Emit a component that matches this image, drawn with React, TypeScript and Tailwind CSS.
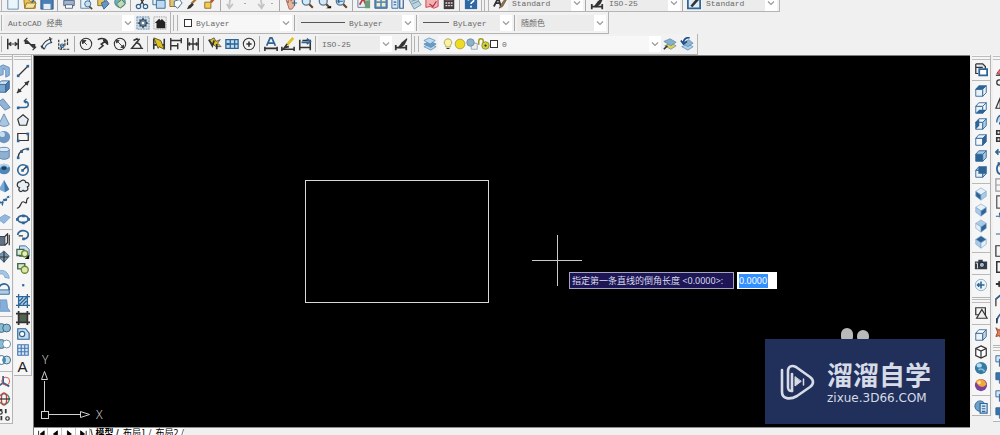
import type { ReactNode } from 'react';
import { clsx } from 'clsx';

const B = '#2f6496';
const L = '#a9cbe8';
const K = '#333333';
const Y = '#dfc21c';

const line = { fill: 'none', stroke: K, strokeWidth: 1.4 };
const blue = { fill: 'none', stroke: B, strokeWidth: 1.4 };

const ends = (points: number[][]) =>
  points.map(([x, y]) => <rect key={`${x}-${y}`} x={x - 1} y={y - 1} width="3" height="3" fill={B} />);

const cube = (front: string, top: string, side: string) => (
  <g stroke={B} strokeWidth="1">
    <path d="M2 6h8v8H2z" fill={front} />
    <path d="M2 6l3.500-4H14l-4 4z" fill={top} />
    <path d="M10 6l4-4v8l-4 4z" fill={side} />
  </g>
);

const iso = (top: string, left: string, right: string) => (
  <g stroke="#7ba3c8" strokeWidth=".7">
    <path d="M8 1l6 4-6 4-6-4z" fill={top} />
    <path d="M2 5l6 4v6l-6-4.500z" fill={left} />
    <path d="M14 5L8 9v6l6-4.500z" fill={right} />
  </g>
);

const lens = (extra?: ReactNode) => (
  <>
    <circle cx="6" cy="6" r="4.500" fill="#d4e8f6" stroke="#57789a" strokeWidth="1.500" />
    <path d="M9.500 9.500l4 4" stroke="#6a4525" strokeWidth="2.500" />
    {extra}
  </>
);

const icons: Record<string, ReactNode> = {
  new: <path d="M2 0h9l3 3v12H2z" fill="#eaf5fc" stroke="#5d87a8" />,
  open: <><path d="M1 4h5l2 2h6v8H2z" fill="#edc451" stroke="#8e6c20" /><path d="M4 8h11l-3 6H2z" fill="#f6e39b" stroke="#8e6c20" /><path d="M8 3l4 2-2 3" {...blue} /></>,
  save: <><path d="M1 1h14v14H1z" fill="#4a7fb5" stroke="#2b527d" /><path d="M4 9h8v6H4z" fill="#e5edf4" /></>,
  print: <><path d="M2 5h12v6H2z" fill="#9fb3cc" stroke="#4c5d7d" /><path d="M4 10h8v4H4zM4 1h8v4H4z" fill="#fff" stroke="#4c5d7d" /></>,
  preview: <><path d="M2 1h10v13H2z" fill="#e9f2f8" stroke="#58799a" /><circle cx="10" cy="9" r="3.500" fill="#c8dff0" stroke={B} /><path d="M12 12l3 3" stroke="#6a4525" strokeWidth="2" /></>,
  publish: <><path d="M2 2h8v9H2z" fill="#e6c657" stroke="#7b6528" /><path d="M6 8l6-3 3 4-6 6z" fill="#6796c4" stroke={B} /></>,
  globe: <><circle cx="8" cy="7" r="6" fill="#6fb2bf" stroke="#45788a" /><path d="M4 9l4 5 6-5-4-5z" fill="#c2d9b8" stroke="#4d7c55" /></>,
  cut: <><path d="M5 1l5 9M12 1L6 10" {...line} /><circle cx="4" cy="12" r="2.500" {...blue} /><circle cx="12" cy="12" r="2.500" {...blue} /></>,
  copy: <><path d="M1 1h9v9H1z" fill="#e4f0f8" stroke={B} /><path d="M5 5h10v9H5z" fill="#bed9ee" stroke={B} /></>,
  paste: <><path d="M1 1h11v11H1z" fill="#e2c476" stroke="#8e6c20" /><path d="M6 6l6-2 3 4-5 6-4-3z" fill="#fafafa" stroke={B} /></>,
  brush: <><path d="M14 1L6 9" stroke="#a8742f" strokeWidth="2.500" /><path d="M7 8l2 2-4 4-4 1 2-4z" fill={K} /></>,
  block: <><path d="M14 1L9 7" stroke="#b9542c" strokeWidth="3" /><path d="M2 7h7v7H2z" fill="#f1cd4e" stroke="#8a642d" /></>,
  undo: <path d="M9 1c-4 3-4 6-4 12M2 9l3 5 4-5" fill="none" stroke="#c3c3c3" strokeWidth="2" />,
  pan: <><path d="M2 3l3 5V1h2l1 5 2-5 2 1v9l-3 4H6z" fill="#e9b39a" stroke="#9b6658" /><path d="M9 8h6M12 5v6" {...blue} /></>,
  zoom: lens(),
  zoomWindow: lens(<path d="M9 14h6v-3z" fill="#111" />),
  zoomPrev: lens(<path d="M3 6h6M3 6l2-2M3 6l2 2" {...blue} />),
  props: <><path d="M1 1h13v12H1z" fill="#e8eff5" stroke="#57789a" /><path d="M3 10l4-7 4 9" fill="none" stroke="#c33d3d" strokeWidth="2" /><path d="M9 5h6v9H9z" fill="#6b9c79" /></>,
  design: <><path d="M1 1h14v13H1z" fill="#5f8fbc" stroke="#315a86" /><path d="M3 3h4v3H3zM9 3h4v3H9zM3 8h4v4H3zM9 8h4v4H9z" fill="#f2efc2" /></>,
  palette: <><path d="M1 1h7v13H1z" fill="#dceaf4" stroke={B} /><path d="M10 3h4v11h-4zM3 4h3M3 7h3M3 10h3" {...blue} /></>,
  sheet: <path d="M1 4l8-3 6 9-8 5zM4 6l6-2M5 9l7-3" fill="#bcd4df" stroke="#6d91a6" />,
  markup: <><path d="M1 3l5-2 4 3 5-1v9l-5 2-4-2-5 1z" fill="#f3b2b2" stroke="#cc3a50" /><path d="M5 9l4 3 4-6" {...line} stroke="#b3314a" /></>,
  calc: <><path d="M2 0h12v15H2z" fill="#423c40" /><path d="M4 2h8v3H4z" fill="#cc6b62" /><path d="M4 8h8M4 11h8" stroke="#ddd" strokeWidth="1.500" strokeDasharray="2 1" /></>,
  help: <><path d="M1 0h14v15H1z" fill="#2d6aa5" /><path d="M5 5c0-4 6-4 6 0 0 2-3 2-3 4M8 11v2" fill="none" stroke="#fff" strokeWidth="2" /></>,
  textStyle: <><path d="M1 12L6 2l3 10M3 8h5" {...line} strokeWidth="2" /><path d="M14 3l-5 7-2 4 4-2 4-7z" fill="#9d753b" stroke={K} strokeWidth=".6" /></>,
  dimStyle: <><path d="M2 9v6M14 9v6M2 12h12" {...line} strokeWidth="2" /><path d="M15 1L9 6l-4 5 2 2 5-4 3-6z" fill={K} /></>,
  tableStyle: <><path d="M1 1h14v13H1z" fill="#ddebf6" stroke={B} strokeWidth="2" /><path d="M13 3l-8 9" stroke={K} strokeWidth="3" /></>,
  gear: <><path d="M1 1h14v14H1z" fill="#c9dced" stroke="#62819e" strokeDasharray="2 1" /><path d="M8 2v12M2 8h12M4 4l8 8M12 4l-8 8" stroke="#4b6987" strokeWidth="2" /><circle cx="8" cy="8" r="4" fill="#69859f" stroke={K} /><circle cx="8" cy="8" r="1.500" fill="#fff" /></>,
  workspace: <><path d="M1 1h14v14H1z" fill="#efefef" stroke="#888" strokeDasharray="1 1" /><path d="M4 14V8H2l5-5 2 2 1-2 4 4v7z" fill="#222" /></>,

  dimLinear: <><path d="M2 2v12M14 2v12" {...line} strokeWidth="1.700" /><path d="M3 8h10M6 6L3 8l3 2M10 6l3 2-3 2" {...line} /></>,
  dimAligned: <><path d="M1 5l4-4M11 15l4-4" {...line} /><path d="M4 4l8 8M3 3v4h4M13 13V9H9" {...line} strokeWidth="2" /></>,
  dimArc: <><path d="M2 13C3 6 7 3 14 2" {...line} /><path d="M5 14c1-5 4-7 9-8" {...blue} /><path d="M1 10l4 4M11 0l2 7" {...line} /></>,
  dimOrdinate: <><path d="M2 3v11h12M5 14v-4h4V3M12 2v8" {...line} strokeDasharray="3 1" /><circle cx="6" cy="10" r="2" {...blue} /></>,
  radius: <><circle cx="8" cy="8" r="6.500" {...line} strokeWidth="1.200" /><path d="M4 4l5 5M4 4v4l4-4z" fill={K} stroke={K} /></>,
  jogged: <><path d="M2 3c6-3 12 0 11 6M3 14l5-4-2-2 6-4M12 4H8M12 4v4" {...line} strokeWidth="1.800" /></>,
  diameter: <><circle cx="8" cy="8" r="6.500" {...line} strokeWidth="1.200" /><path d="M4 4l8 8M4 4v3l3-3zM12 12V9l-3 3z" fill={K} stroke={K} /></>,
  angular: <path d="M11 2L2 13h13M6 7c4-1 6 2 7 6M4 4l4-2 2 3" {...line} strokeWidth="1.700" />,
  quick: <><path d="M2 2v12M14 2v12M2 9h12" {...line} strokeWidth="1.800" /><path d="M2 1l8 3 4 10-6-3-1 2z" fill={Y} stroke="#554a18" /></>,
  baseline: <path d="M2 1v14M2 4h12M2 10h8M14 1v6M10 7v7M12 4h-3" {...line} strokeWidth="1.600" />,
  continued: <path d="M2 1v14M8 1v14M14 1v14M2 8h12M4 6v4M12 6v4" {...line} strokeWidth="1.600" />,
  leader: <><path d="M1 4l6-3 2 4 5-2-3 4 4 4H9z" fill={Y} stroke="#555" /><path d="M1 3l4 7 2-6M10 8v6" {...line} strokeWidth="2" /></>,
  tolerance: <><path d="M1 3h14v10H1zM6 3v10M11 3v10M1 8h14" fill="#c4def1" stroke={B} strokeWidth="1.500" /><circle cx="3.500" cy="8" r="1.500" fill={B} /></>,
  center: <><circle cx="8" cy="8" r="6.500" {...line} strokeWidth="1.200" /><path d="M8 5v6M5 8h6" {...line} strokeWidth="1.800" /></>,
  dimText: <><path d="M3 10L7 1h2l4 9M5 7h6" {...blue} strokeWidth="2" /><path d="M1 13h14M1 11v5M15 11v5" {...line} strokeWidth="1.800" /></>,
  dimEdit: <><path d="M14 1L7 9" stroke={Y} strokeWidth="3" /><path d="M7 8l-3 4 5-1M1 14h14M1 11v5M15 11v5" {...line} strokeWidth="1.800" /></>,
  dimUpdate: <><path d="M2 3v12M14 3v12M2 12h12M5 4h8" {...line} strokeWidth="1.800" /><path d="M4 6h8M10 2l4 3-4 3" {...blue} strokeWidth="2" /></>,
  layers: <g stroke="#5588b1" strokeWidth=".8"><path d="M1 11l7-3 7 3-6 4z" fill="#b7d5ed" /><path d="M1 8l7-3 7 3-6 4z" fill="#6b9cc6" /><path d="M1 4l6-3 7 3-6 4z" fill="#bedbf0" /></g>,
  layersMake: <g stroke="#5e8799" strokeWidth=".8"><path d="M2 10l7-3 6 3-6 4z" fill="#e2cf4b" /><path d="M1 5l7-3 7 4-6 4z" fill="#80b0d2" /><path d="M1 14l4-4" stroke={K} strokeWidth="2" /></g>,
  layersPrev: <g stroke="#5588b1" strokeWidth=".8"><path d="M2 11l7-3 6 3-6 4z" fill="#aed0ea" /><path d="M3 7l7-4 5 4-6 4z" fill="#8bb3d6" /><path d="M11 1C7 0 4 3 4 6M1 4l3 4 4-3" fill="none" stroke="#1f4e87" strokeWidth="2" /></g>,
  bulb: <><path d="M8 1a5 5 0 0 1 3 9v2H5v-2a5 5 0 0 1 3-9z" fill="#fbf2a1" stroke="#9b9045" /><path d="M6 14h4" {...line} /></>,
  sun: <circle cx="8" cy="8" r="6.500" fill="#eedb25" stroke="#9e9130" />,
  vp: <><path d="M7 7h8v8H7z" fill="#eee" stroke="#7899af" /><circle cx="6" cy="6" r="5" fill="#8db1c8" stroke="#628398" /></>,
  lock: <><path d="M1 9V4c0-4 6-4 6 0v3" fill="none" stroke="#a39d1e" strokeWidth="2" /><circle cx="10" cy="10" r="5" fill="#cfd03d" stroke="#7d8127" /><circle cx="10" cy="10" r="1.500" fill={K} /></>,

  line: <><path d="M2 14L14 2" {...line} />{ends([[2, 13], [13, 2]])}</>,
  xline: <><path d="M1 15L15 1" {...line} /><path d="M2 14l1-4 3 3zM14 2l-1 4-3-3z" fill={K} stroke={K} /></>,
  pline: <><path d="M2 12h8c6 0 5-8-1-7" {...blue} strokeWidth="1.800" /><path d="M9 5l3-3M9 5l3 2" {...blue} />{ends([[2, 12]])}</>,
  polygon: <path d="M8 2l6 5-2 7H4L2 7z" {...line} fill="#e5eef5" />,
  rect: <><path d="M2 4h12v8H2z" {...line} />{ends([[2, 12], [13, 4]])}</>,
  arc: <><path d="M2 14C3 7 7 3 14 3" {...line} />{ends([[2, 13], [6, 6], [13, 3]])}</>,
  circle: <><circle cx="8" cy="8" r="6" {...blue} strokeWidth="1.800" /><path d="M8 8l4-4" {...line} />{ends([[7, 8], [12, 4]])}</>,
  cloud: <path d="M5 3c2-3 6-2 6 1 4-1 5 4 2 5 2 4-2 6-5 4-3 3-6 0-4-3-4-1-3-7 1-7z" {...line} fill="#e7f0f6" />,
  spline: <path d="M1 14C5 14 5 9 7 7s5 3 5 0 1-5 3-5" {...line} />,
  ellipse: <><ellipse cx="8" cy="8" rx="6" ry="4" {...blue} strokeWidth="2" />{ends([[1, 8], [14, 8], [8, 4], [8, 12]])}</>,
  ellipseArc: <><path d="M2 8c0-7 13-6 12 0 0 3-3 5-6 4" {...blue} strokeWidth="2" /><path d="M3 9h5" {...line} />{ends([[8, 12]])}</>,
  insert: <><path d="M4 1h7l4 4v8H4z" fill="#cee2f2" stroke={B} /><path d="M1 5h8v7H1z" fill="#dce9ce" stroke="#3f6555" strokeWidth="1.500" /><circle cx="10" cy="10" r="3.500" fill="#e7eeb9" stroke="#648930" strokeWidth="1.500" /><path d="M15 11v5h-5z" fill="#111" /></>,
  makeBlock: <><path d="M2 3h8v6H2z" fill="#dce9ce" stroke="#3f6555" strokeWidth="1.600" /><circle cx="10" cy="10" r="4" fill="#dce8aa" stroke="#6a8833" strokeWidth="1.500" /></>,
  point: <rect x="7" y="7" width="2.500" height="2.500" fill={B} />,
  hatch: <><path d="M3 3h10v10H3z" fill="#b7d5ed" /><path d="M3 0v16M13 0v16M0 3h16M0 13h16M4 8l4-4M4 12l8-8M8 12l4-4" {...blue} strokeWidth="1.500" /></>,
  gradient: <><path d="M3 3h10v10H3z" fill="#536353" /><path d="M3 0v16M13 0v16M0 3h16M0 13h16" {...line} strokeWidth="2" /></>,
  region: <><path d="M2 2h9l4 5v7H2z" fill="#c6dcef" stroke={B} strokeWidth="1.300" /><circle cx="7" cy="8" r="3" fill="#fff" stroke={B} strokeWidth="1.300" /></>,
  table: <path d="M2 2h12v12H2zM2 6h12M2 10h12M6 2v12M10 2v12" fill="#d7e8f7" stroke="#4476b2" strokeWidth="1.300" />,

  polysolid: <path d="M1 4l6-3 7 3v9l-4 2V7L7 5v7l-6 2z" fill="#8fb5dc" stroke="#5e87b6" />,
  box: <g stroke={B}><path d="M1 5h9v9H1z" fill="#7ba7d1" /><path d="M1 5l4-4h9l-4 4z" fill="#d3e5f4" /><path d="M10 5l4-4v9l-4 4z" fill="#4e7baa" /></g>,
  wedge: <path d="M1 6l6-4 8 10-6 3z" fill="#91b4d6" stroke="#5d82a8" />,
  cone: <path d="M8 1l6 12c-3 3-9 3-12 0z" fill="#a8c6e2" stroke="#5d82a8" />,
  sphere: <><circle cx="8" cy="8" r="7" fill="#6c95c1" /><circle cx="6" cy="5" r="3" fill="#c7def0" /></>,
  cylinder: <><path d="M2 4v9c3 3 9 3 12 0V4z" fill="#8eb0d3" stroke="#5d82a8" /><ellipse cx="8" cy="4" rx="6" ry="2.500" fill="#d9e9f5" stroke="#5d82a8" /></>,
  torus: <><ellipse cx="8" cy="8" rx="7" ry="6" fill="#4f88b7" /><ellipse cx="8" cy="7" rx="3" ry="2" fill="#1e4162" /><path d="M3 6c2-4 8-4 10 0" fill="none" stroke="#b8d7ee" strokeWidth="2" /></>,
  pyramid: <><path d="M8 1l6 11-5 3-7-3z" fill="#7aa8d4" /><path d="M8 1l6 11-5 3z" fill="#3f78ae" /></>,
  helix: <path d="M1 13c2-8 5-3 5-3 2-8 4-3 4-3 1-6 3-4 5-6" {...blue} strokeWidth="2.200" strokeDasharray="3 1" />,
  plane: <path d="M1 8l8-5 6 3-7 7z" fill="#93b8e0" stroke="#7b9fc8" />,
  extrude: <><path d="M1 4h8v10H1z" fill="#5d7085" stroke={K} /><path d="M9 4l3-3v10l-3 3M14 14V2" {...line} /></>,
  pull: <><path d="M8 1l6 6-6 7-7-7z" fill="#7a99b5" stroke="#39556d" /><path d="M8 2v12M3 8h10" {...line} /></>,
  sweep: <path d="M1 6c8-3 12 2 13 8l-5-1C8 9 6 8 1 10z" fill="#a6c6e5" stroke="#7da4c6" />,
  revolve: <><path d="M2 9c0-9 12-9 12 0M2 12h12" {...blue} strokeWidth="2" /><path d="M2 9h12v5H2z" fill="#b1cde6" stroke={B} /></>,
  loft: <path d="M3 1h8l1 9 3 4H1l3-4z" fill="#85aedb" stroke="#6c94c0" />,
  union: <><circle cx="5" cy="8" r="5" fill="#8abbd0" stroke="#315e7c" /><circle cx="11" cy="8" r="4.500" fill="#8abbd0" stroke="#315e7c" /></>,
  subtract: <><circle cx="5" cy="8" r="5" fill="#8abbd0" stroke="#315e7c" /><circle cx="11" cy="8" r="4.500" fill="#fff" stroke="#5c83a5" /></>,
  intersect: <><circle cx="5" cy="8" r="5" fill="#fff" stroke="#315e7c" /><circle cx="11" cy="8" r="4.500" fill="#c9e0ed" stroke="#315e7c" /><path d="M8 4c3 2 3 6 0 8-2-2-2-6 0-8z" fill="#478db0" /></>,
  move3d: <><path d="M7 9V1M7 9l7 4M7 9l-6 4" {...blue} strokeWidth="2" /><circle cx="10" cy="7" r="4.500" fill="none" stroke="#d04444" /></>,
  rotate3d: <><circle cx="8" cy="8" r="6" fill="none" stroke="#438b61" strokeWidth="1.500" /><ellipse cx="8" cy="8" rx="3" ry="7" fill="none" stroke="#c83c3c" strokeWidth="1.500" /><path d="M1 8h14" {...line} /></>,
  align3d: <><path d="M10 1v5M5 9v5M2 2h4" {...line} strokeWidth="2" /><circle cx="12" cy="12" r="2" {...line} /><circle cx="4" cy="5" r="2" {...line} /></>,

  views: <><path d="M2 1h8l3 3v3M2 1v11h3M2 5h8" {...line} fill="#dce9f3" /><path d="M6 7h9v7H6z" fill="#fff" stroke={B} strokeWidth="2" /></>,
  top: cube('#e8f1f8', B, '#e8f1f8'),
  bottom: <>{cube('#e8f1f8', '#f5f9fc', '#f5f9fc')}<path d="M2 14l4-4h8l-4 4z" fill={B} /></>,
  left: <>{cube('#e8f1f8', '#f5f9fc', L)}<path d="M2 6l4-4v8l-4 4z" fill={B} /></>,
  right: cube('#f5f9fc', '#e8f1f8', B),
  front: cube(B, L, L),
  back: <>{cube('#e8f1f8', L, L)}<path d="M5 2h9v8H5z" fill={B} /></>,
  sw: iso('#e5f0f8', B, L),
  se: iso('#e5f0f8', L, B),
  ne: iso(L, '#e5f0f8', B),
  nw: iso(B, L, '#e5f0f8'),
  camera: <><path d="M1 5h4V3h5v2h5v9H1z" fill="#343d48" /><circle cx="9" cy="9" r="3" fill="#9db8ce" stroke="#111" /><path d="M2 7h2v6" stroke="#eee" fill="none" /></>,
  orbit: <><circle cx="8" cy="8" r="6.500" fill="#edf5fb" stroke="#89abc5" /><path d="M8 4v8M4 8h8M6 6l-2 2 2 2" {...blue} strokeWidth="1.800" /></>,
  wire2d: <><path d="M2 2h11v8H2z" {...line} /><path d="M9 4l6 10H3z" {...line} fill="#eee" /></>,
  wire3d: cube('#edf3f7', '#fff', '#c3d3df'),
  hidden: <path d="M8 1l6 3v8l-6 3-6-3V4zM2 4l6 3 6-3M8 7v8" {...line} fill="#fff" />,
  realistic: <><circle cx="8" cy="8" r="7" fill="#337aa5" /><ellipse cx="6" cy="5" rx="3" ry="2.500" fill="#b5dbef" /><path d="M5 10c3-2 6 0 7 2" fill="none" stroke="#88bad7" strokeWidth="2" /></>,
  conceptual: <><circle cx="8" cy="8" r="7" fill="#78429b" /><path d="M2 4c4-5 11-2 12 3-3 5-9 4-12-3z" fill="#f3a73b" /><circle cx="6" cy="5" r="2" fill="#ffdd91" /></>,
  styles: <><circle cx="7" cy="7" r="6" fill="#6da0c9" stroke={B} /><path d="M7 4h8v11H7z" fill="#d4e7f5" stroke={B} strokeWidth="1.300" /><path d="M9 7h4M9 10h4M9 13h4" {...blue} /></>,

  erase: <><path d="M2 12L8 4l6 4-5 6z" fill="#dd6673" stroke="#944" /><path d="M1 14h12" {...line} /></>,
  copyObj: <><circle cx="5" cy="4" r="3" {...line} /><circle cx="11" cy="11" r="4" {...line} /></>,
  mirror: <path d="M6 2v12H1zM10 2v12h5z" {...line} />,
  offset: <path d="M2 12c0-8 5-10 12-9M5 14h9V8C8 7 6 10 5 14" {...blue} fill="#b8d5ec" />,
  array: <path d="M2 2h4v4H2zM10 2h4v4h-4zM2 10h4v4H2zM10 10h4v4h-4z" {...line} strokeWidth="1.800" />,
  move: <path d="M8 1v14M1 8h14M4 5L1 8l3 3M12 5l3 3-3 3" {...blue} strokeWidth="1.800" />,
  rotate: <path d="M7 2C0 3 1 14 8 14s8-9 2-11M3 1l5 1-2 4" {...blue} strokeWidth="2" />,
  scale: <path d="M1 1h13v14H1zM1 8h7v7" {...line} stroke="#999" />,
  stretch: <path d="M2 1h6v14H2zM6 4h8v9H6" {...line} stroke="#555" />,
  trim: <path d="M1 6h13M5 2l2 9M10 1v14" {...blue} />,
  extend: <path d="M1 8h5M8 8h4M14 1v14" {...blue} />,
  breakPt: <path d="M1 2h13v12H1z" {...line} />,
  breakObj: <path d="M6 2H2v12h12V2h-3" {...line} strokeWidth="1.700" />,
  join: <path d="M1 8h6M4 5l3 3-3 3M15 8H9" {...line} strokeWidth="2.400" />,
  chamfer: <><path d="M1 15V7l7-6h7" {...line} /><path d="M1 7l7-6" {...blue} strokeWidth="2" /></>,
  fillet: <><path d="M2 15C2 7 7 2 15 2" {...blue} strokeWidth="1.800" /><path d="M2 15V9" {...line} /></>,
  explode: <><path d="M1 2l4 3 2-4 3 4 5-2-3 5 3 5-5-1-3 3-2-4-4 1 2-5z" fill="#e08051" stroke="#963f31" /></>,
  order: <><path d="M1 2h8v7H1z" fill="#d4e6f4" stroke={B} /><path d="M5 6h9v8H5z" fill="#5286b4" stroke={B} /></>,
  orderBack: <><path d="M5 5h9v9H5z" fill="#d4e6f4" stroke={B} /><path d="M1 2h9v8H1z" fill="#3974a8" stroke={B} /></>,
};

function Icon({ name, className = 'size-3.5' }: { name: string; className?: string }) {
  return (
    <svg viewBox="0 0 16 16" className={clsx('shrink-0', className)} aria-hidden="true">
      {icons[name]}
    </svg>
  );
}

function Tool({ name }: { name: string }) {
  return (
    <button type="button" aria-label={name} className="flex h-4 w-[17px] shrink-0 items-center justify-center">
      {name === 'mtext' ? <span className="text-[15px] leading-4 text-[#222222]">A</span> : <Icon name={name} />}
    </button>
  );
}

// '|' in a tool list is a separator
function Tools({ names }: { names: string[] }) {
  return (
    <>
      {names.map((name, i) => (name === '|' ? <Sep key={i} /> : <Tool key={i} name={name} />))}
    </>
  );
}

function Sep() {
  return <span className="mx-0.5 h-4 w-px shrink-0 bg-[#a9a9a9]" />;
}

function Strip({ grip, children }: { grip?: boolean; children: ReactNode }) {
  return (
    <div className="flex shrink-0 items-center border-r border-b border-[#b4b4b4] bg-[#f2f2f2] pr-0.5">
      {grip ? (
        <span className="mx-0.5 h-4 w-[5px] shrink-0 border-x border-[#b4b4b4]" />
      ) : (
        <span className="mr-0.5 h-4 w-0.5 shrink-0 border-r border-[#b4b4b4]" />
      )}
      {children}
    </div>
  );
}

function Chevron() {
  return (
    <span className="pointer-events-none flex h-full w-3 shrink-0 items-center justify-center bg-white">
      <svg viewBox="0 0 8 8" className="size-2" fill="none" stroke="#9a9a9a" strokeWidth="1.2" aria-hidden="true">
        <path d="M1 2.500l3 3 3-3" />
      </svg>
    </span>
  );
}

interface ComboProps {
  label: string;
  value: string;
  className: string;
  children?: ReactNode;
  white?: boolean;
}

function Combo({ label, value, className, children, white }: ComboProps) {
  return (
    <label
      className={clsx(
        'flex h-4 shrink-0 items-center gap-1 pl-1 text-[#686868]',
        white ? 'bg-[#f7f7f7]' : 'bg-[#ececec]',
        className,
      )}
    >
      {children}
      <select
        aria-label={label}
        defaultValue={value}
        className="h-full min-w-0 flex-1 appearance-none bg-transparent pt-px font-['Liberation_Mono','Noto_Sans_CJK_SC',monospace] text-[8px] leading-4 outline-none"
      >
        <option>{value}</option>
      </select>
      <Chevron />
    </label>
  );
}

function GripBar() {
  return <span className="my-px block h-1 w-full shrink-0 border-y border-[#bdbdbd]" />;
}

function SideTools({ names, className }: { names: string[]; className?: string }) {
  return (
    <div className={clsx('flex flex-col items-center justify-between', className)}>
      {names.map((name, i) =>
        name === '|' ? (
          <span key={i} className="my-0.5 h-px w-full shrink-0 bg-[#b9b9b9]" />
        ) : (
          <Tool key={i} name={name} />
        ),
      )}
    </div>
  );
}

const standardTools = [
  'new', 'open', 'save', '|', 'print', 'preview', 'publish', 'globe', '|',
  'cut', 'copy', 'paste', 'brush', 'block', '|',
];
const viewTools = [
  '|', 'pan', 'zoom', 'zoomWindow', 'zoomPrev', '|',
  'props', 'design', 'palette', 'sheet', 'markup', 'calc', '|', 'help',
];
const dimensionTools = [
  'dimLinear', 'dimAligned', 'dimArc', 'dimOrdinate', '|', 'radius', 'jogged', 'diameter', 'angular', '|',
  'quick', 'baseline', 'continued', '|', 'leader', 'tolerance', 'center', '|', 'dimText', 'dimEdit', 'dimUpdate', '|',
];
const modelingTools = [
  'polysolid', 'box', 'wedge', 'cone', 'sphere', 'cylinder', 'torus', 'pyramid', 'helix', 'plane', '|',
  'extrude', 'pull', 'sweep', 'revolve', 'loft', '|', 'union', 'subtract', 'intersect', '|',
  'move3d', 'rotate3d', 'align3d',
];
const drawTools = [
  'line', 'xline', 'pline', 'polygon', 'rect', 'arc', 'circle', 'cloud', 'spline', 'ellipse', 'ellipseArc',
  'insert', 'makeBlock', 'point', 'hatch', 'gradient', 'region', 'table', 'mtext',
];
const viewCubeTools = [
  'views', '|', 'top', 'bottom', 'left', 'right', 'front', 'back', '|', 'sw', 'se', 'ne', 'nw', '|', 'camera', '|', 'orbit',
];
const styleTools = ['wire2d', '|', 'wire3d', 'hidden', 'realistic', 'conceptual', '|', 'styles'];
const modifyTools = [
  'erase', 'copyObj', 'mirror', 'offset', 'array', 'move', 'rotate', 'scale', 'stretch', 'trim', 'extend',
  'breakPt', 'breakObj', 'join', 'chamfer', 'fillet', 'explode',
];
const orderTools = ['order', 'orderBack', 'order', 'orderBack'];

function UndoButton({ label, flip }: { label: string; flip?: boolean }) {
  return (
    <>
      <button type="button" aria-label={label} className="flex h-4 w-[17px] shrink-0 items-center justify-center">
        <Icon name="undo" className={flip ? 'size-3.5 -scale-x-100' : 'size-3.5'} />
      </button>
      <span className="flex w-2.5 shrink-0 justify-center">
        <span className="h-px w-0.5 bg-[#aaaaaa]" />
      </span>
    </>
  );
}

function Toolbars() {
  return (
    <header className="shrink-0">
      <div className="flex h-3 items-end overflow-hidden">
        <Strip>
          <Tools names={standardTools} />
          <UndoButton label="undo" />
          <UndoButton label="redo" flip />
          <Tools names={viewTools} />
        </Strip>
        <Strip grip>
          <Tool name="textStyle" />
          <Combo label="Text style" value="Standard" className="w-[75px]" />
          <Sep />
          <Tool name="dimStyle" />
          <Combo label="Dimension style" value="ISO-25" className="w-[75px]" />
          <Sep />
          <Tool name="tableStyle" />
          <Combo label="Table style" value="Standard" className="w-[75px]" />
        </Strip>
      </div>
      <div className="flex h-[22px] items-stretch">
        <Strip>
          <Combo label="Workspace" value="AutoCAD 经典" className="w-[130px]" />
          <Tools names={['gear', 'workspace']} />
        </Strip>
        <Strip grip>
          <Combo label="Color" value="ByLayer" className="w-[112px]" white>
            <span className="size-2 shrink-0 border border-[#333333] bg-white" />
          </Combo>
          <Sep />
          <Combo label="Linetype" value="ByLayer" className="w-[117px]">
            <span className="h-px w-11 shrink-0 bg-[#555555]" />
          </Combo>
          <Sep />
          <Combo label="Lineweight" value="ByLayer" className="w-[93px]">
            <span className="h-px w-[26px] shrink-0 bg-[#555555]" />
          </Combo>
          <Sep />
          <Combo label="Plot style" value="随颜色" className="w-[89px]" />
        </Strip>
      </div>
      <div className="flex h-[21px] items-stretch">
        <Strip>
          <Tools names={dimensionTools} />
          <Combo label="Current dimension style" value="ISO-25" className="w-[74px]" />
          <Tool name="dimStyle" />
        </Strip>
        <Strip grip>
          <Tool name="layers" />
          <Combo label="Layer" value="0" className="w-[223px]" white>
            <span className="flex items-center">
              <Icon name="bulb" className="size-3" />
              <Icon name="sun" className="size-3" />
              <Icon name="vp" className="size-3" />
              <Icon name="lock" className="size-3" />
              <span className="size-2 border border-[#333333] bg-white" />
            </span>
          </Combo>
          <Tools names={['layersMake', 'layersPrev']} />
        </Strip>
      </div>
    </header>
  );
}

function Axes() {
  return (
    <svg
      viewBox="0 0 72 72"
      className="absolute bottom-1.5 left-1.5 size-[72px] font-['Noto_Sans',sans-serif] text-xs font-light"
      fill="none"
      stroke="#d0d0d0"
      shapeRendering="crispEdges"
      aria-hidden="true"
    >
      <path d="M1.500 62.500h7v7h-7zM4.500 62V32M9 65.500h31" />
      <path d="M4.500 22.500l-3 8h6zM40.500 62.500v6l9-3z" shapeRendering="auto" />
      <text x="2" y="15" fill="#d0d0d0" stroke="none">Y</text>
      <text x="56" y="70" fill="#d0d0d0" stroke="none">X</text>
    </svg>
  );
}

function Watermark() {
  return (
    <div className="absolute right-[25px] bottom-[3px]">
      <div className="-mb-1 ml-[76px] flex gap-1" aria-hidden="true">
        <span className="h-[15px] w-3 rounded-full bg-[#b9b9b9]" />
        <span className="mt-0.5 h-[13px] w-3 rounded-full bg-[#b9b9b9]" />
      </div>
      <div className="relative flex h-[85px] w-[180px] items-center gap-3 bg-[#20305b] pl-[15px] text-[#d6dbe7]">
        <svg viewBox="0 0 35 36" className="h-9 w-[35px] shrink-0" fill="none" stroke="currentColor" strokeWidth="2.6" strokeLinecap="round" strokeLinejoin="round" aria-hidden="true">
          <path d="M12 27c-3 0-4-1-4-4V7c0-5 4-6 8-4l14 10c4 3 4 7 0 10L17 32c-7 4-15 3-15-4V6" />
          <path d="M12 27V10" />
          <path d="M15 13v9l6-4.500z" fill="currentColor" strokeWidth="1" />
          <path d="M23.500 15v6" strokeWidth="1.500" />
        </svg>
        <div className="whitespace-nowrap">
          <p className="font-['Noto_Sans_CJK_SC',sans-serif] text-[26px] leading-8 font-bold">溜溜自学</p>
          <p className="font-['DejaVu_Sans',sans-serif] text-xs leading-4">zixue.3D66.COM</p>
        </div>
      </div>
    </div>
  );
}

function Canvas() {
  return (
    <main className="relative min-h-0 flex-1 overflow-hidden bg-black">
      <svg className="absolute inset-0 h-full w-full" fill="none" shapeRendering="crispEdges" aria-hidden="true">
        <rect x="271.500" y="124.500" width="183" height="122" stroke="#d8d8d8" />
        <path d="M498 204.500h50M523.500 179v51" stroke="#c9c9c9" />
      </svg>
      <label className="absolute top-[216px] left-[535px] flex h-[17px] items-center gap-[3px] font-['Noto_Sans','Noto_Sans_CJK_SC',sans-serif] text-[9px] leading-4 whitespace-nowrap">
        <span className="h-full w-[165px] border border-[#a4a4bd] bg-[#1c1656] pl-0.5 text-[#dadae8]">
          指定第一条直线的倒角长度 &lt;0.0000&gt;:
        </span>
        <span className="flex h-full w-10 items-center bg-white pl-0.5">
          <input
            defaultValue="0.0000"
            className="h-3.5 w-[29px] bg-[#3390ff] text-[9px] text-white outline-none"
          />
        </span>
      </label>
      <Axes />
      <Watermark />
    </main>
  );
}

const navPaths = [
  { label: 'First layout', d: 'M2 1v8M9 1v8L4 5z' },
  { label: 'Previous layout', d: 'M8 1v8L3 5z' },
  { label: 'Next layout', d: 'M3 1v8l5-4z' },
  { label: 'Last layout', d: 'M2 1v8l5-4zM9 1v8' },
];

function LayoutTabs() {
  return (
    <footer className="flex h-2 shrink-0 items-start overflow-hidden border-t border-[#8e8e8e] bg-[#f0f0f0] font-['Noto_Sans_CJK_SC',sans-serif] text-[9px] leading-[10px] text-black">
      {navPaths.map((nav) => (
        <button
          key={nav.label}
          type="button"
          aria-label={nav.label}
          className="flex h-3 w-3.5 shrink-0 items-center justify-center border-r border-[#c4c4c4] bg-white"
        >
          <svg viewBox="0 0 10 10" className="size-2" fill="#000" stroke="#000" aria-hidden="true">
            <path d={nav.d} />
          </svg>
        </button>
      ))}
      <div className="flex shrink-0 gap-1 bg-white">
        {['模型', '布局1', '布局2'].map((tab, i) => (
          <button key={tab} type="button" className={clsx('flex shrink-0 gap-0.5', i === 0 && 'font-bold')}>
            {i === 0 && <span>\</span>}
            <span>{tab}</span>
            <span>/</span>
          </button>
        ))}
      </div>
    </footer>
  );
}

export default function App() {
  return (
    <div className="flex h-screen flex-col overflow-hidden bg-[#f0f0f0] font-['Liberation_Sans','Noto_Sans_CJK_SC',sans-serif]">
      <Toolbars />
      <div className="flex min-h-0 flex-1">
        <aside className="flex shrink-0 items-start gap-px">
          <div className="flex w-[13px] flex-col items-end overflow-hidden border-r border-b border-[#b4b4b4] bg-[#f6f6f6]">
            <GripBar />
            <SideTools names={modelingTools} className="mt-0.5 h-[360px]" />
          </div>
          <div className="flex w-[18px] flex-col items-center border-r border-b border-[#b4b4b4] bg-[#f6f6f6]">
            <GripBar />
            <SideTools names={drawTools} className="mt-0.5 h-[312px]" />
          </div>
        </aside>
        <div className="ml-px flex min-w-0 flex-1 flex-col border-t border-l border-[#7d7d7d]">
          <Canvas />
          <LayoutTabs />
        </div>
        <aside className="flex shrink-0 items-start gap-0.5 pl-0.5">
          <div className="w-[19px] border-r border-b border-[#b4b4b4] bg-[#f6f6f6]">
            <GripBar />
            <SideTools names={viewCubeTools} className="mt-0.5 h-[231px]" />
            <div className="mt-1 border-t border-[#b4b4b4]">
              <GripBar />
              <SideTools names={styleTools} className="mt-0.5 h-[110px]" />
            </div>
          </div>
          <div className="w-[7px] overflow-hidden border-b border-[#b4b4b4] bg-[#f6f6f6]">
            <GripBar />
            <SideTools names={modifyTools} className="mt-0.5 h-[279px] w-[17px]" />
            <div className="mt-1 border-t border-[#b4b4b4]">
              <GripBar />
              <SideTools names={orderTools} className="mt-0.5 h-[68px] w-[17px]" />
            </div>
          </div>
        </aside>
      </div>
    </div>
  );
}
